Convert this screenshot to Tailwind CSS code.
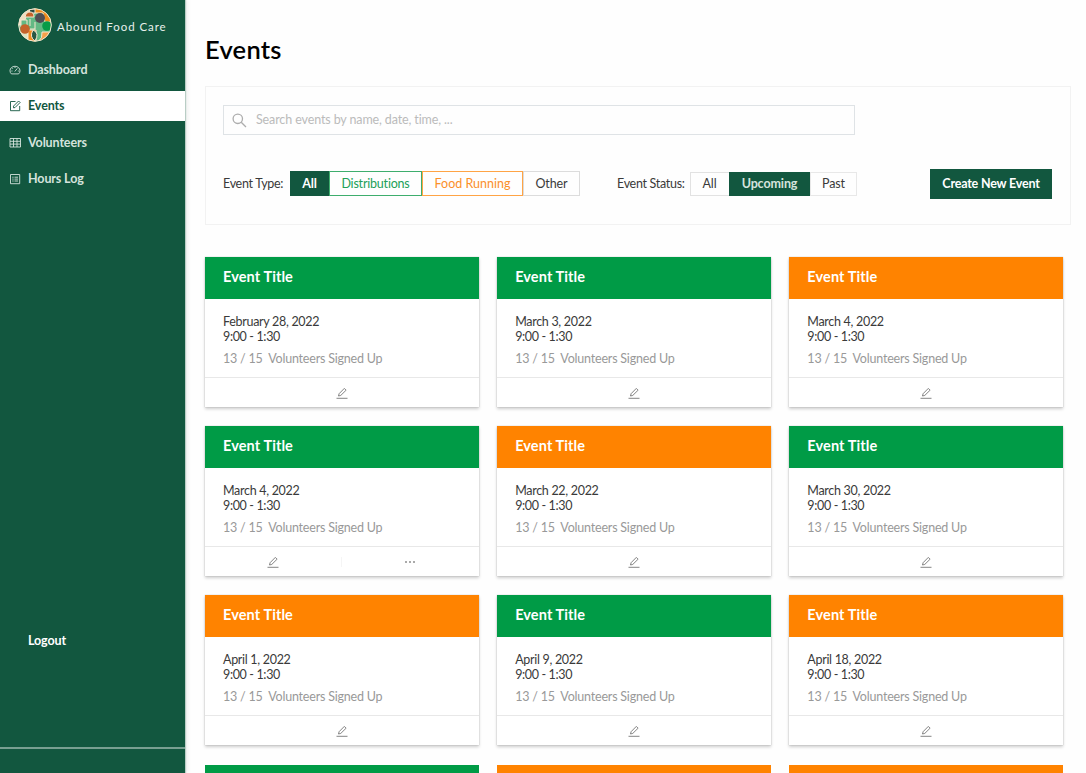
<!DOCTYPE html>
<html lang="en">
<head>
<meta charset="utf-8">
<title>Events</title>
<script src="https://cdn.jsdelivr.net/npm/@tailwindcss/browser@4"></script>
</head>
<body class="h-[773px] w-[1086px] overflow-hidden bg-[#fefefe] font-['Lato','Open_Sans',sans-serif] text-[12.5px] tracking-[-0.12px] text-[#3a3a3a]">
<div class="flex h-full">
  <aside class="flex w-[185px] shrink-0 flex-col bg-[#12573f] text-[#d5e3dd] shadow-[1px_0_1px_#b9cdc5,3px_0_4px_rgba(0,0,0,0.06)]">
    <div class="flex h-[54.5px] items-start gap-[5px] pt-2 pl-[18px]">
      <svg class="size-[34px] shrink-0" viewBox="0 0 34 34">
        <defs><clipPath id="disc"><circle cx="17" cy="17" r="16.3"/></clipPath></defs>
        <g clip-path="url(#disc)" stroke="#f4e6cf" stroke-width="1">
          <rect width="34" height="34" fill="#63b984"/>
          <path d="M0 0H15V5Q8 5 7 12V17H0Z" fill="#f0dfc0"/>
          <path d="M16 0H34V14H27L25 5H16Z" fill="#ee8b1c"/>
          <path d="M11 1H17V5H12Z" fill="#2d4a40"/>
          <path d="M7 9Q8 4 12 4Q16 4 16 9Z" fill="#c5632b"/>
          <path d="M3 12H9V19H3Z" fill="#63b984"/>
          <path d="M12 11V18M17 14V21H12" fill="none"/>
          <path d="M24 24H34V34H20Q25 30 24 24Z" fill="#f6a04a"/>
          <path d="M0 24H10V34H0Z" fill="#dce5c4"/>
          <path d="M10 22H18V34H10Z" fill="#f28c1e"/>
          <path d="M15 22Q22 25 17 33Q11 29 15 22Z" fill="#295844"/>
          <g stroke="none">
            <circle cx="7" cy="21" r="4.8" fill="#c5632b"/>
            <circle cx="22" cy="10" r="5" fill="#514e53"/>
            <circle cx="29" cy="18" r="4.8" fill="#079b47"/>
          </g>
        </g>
        <circle cx="17" cy="17" r="16.3" fill="none" stroke="#f4e6cf" stroke-width="1"/>
      </svg>
      <span class="pt-[11px] text-[11.5px] leading-4 tracking-[0.92px] whitespace-nowrap text-[#e8f0ec]">Abound Food Care</span>
    </div>
    <nav class="flex flex-col gap-[6.5px] font-bold">
      <a class="flex h-[30px] items-center gap-[7px] pl-[9px]">
        <svg class="size-3" viewBox="0 0 12 12" fill="none" stroke="currentColor" stroke-width=".9"><path d="M2.4 9.9A5 4.5 0 1 1 9.6 9.9ZM5.8 7.5 8.3 4.4M2.4 7H3.5M8.8 7H9.8M6 2.9V4M3.3 4.2 4 4.9"/></svg>
        <span class="pt-px">Dashboard</span></a>
      <a class="flex h-[30px] items-center gap-[7px] bg-white pl-[9px] text-[#12573f]">
        <svg class="size-3" viewBox="0 0 12 12" fill="none" stroke="currentColor" stroke-width=".9"><path d="M6.5 1.5H1.5V10.7H10.7V6M4.5 7.8V6.1L9.6 1 11.1 2.5 6 7.6Z"/></svg>
        <span>Events</span></a>
      <a class="flex h-[30px] items-center gap-[7px] pl-[9px]">
        <svg class="size-3" viewBox="0 0 12 12" fill="none" stroke="currentColor" stroke-width=".9"><path d="M1 1.5H11.5V10H1ZM1 4.3H11.5M1 7.1H11.5M4.5 1.5V10M8 1.5V10"/></svg>
        <span class="pt-px">Volunteers</span></a>
      <a class="flex h-[30px] items-center gap-[7px] pl-[9px]">
        <svg class="size-3" viewBox="0 0 12 12" fill="none" stroke="currentColor" stroke-width=".9"><path d="M1.5 1.5H10.7V10.7H1.5ZM3.3 4.2H4.6M5.5 4.2H9M3.3 6.1H4.6M5.5 6.1H9M3.3 8H4.6M5.5 8H9"/></svg>
        <span>Hours Log</span></a>
    </nav>
    <a class="mt-auto pb-[96px] pl-7 font-bold text-white">Logout</a>
    <div class="h-[26px] border-t-2 border-[#789f91]"></div>
  </aside>

  <main class="flex min-w-0 flex-1 flex-col overflow-hidden pl-5">
    <h1 class="mt-[33px] h-[53px] shrink-0 text-[25.5px] leading-8 font-semibold tracking-[0.25px] text-black">Events</h1>
    <section class="flex h-[139px] w-[866px] shrink-0 flex-col border border-[#f2f2f2] pt-[18px] pl-[17px]">
      <div class="flex h-[30px] w-[632px] items-center gap-[9px] border border-[#dfe3e6] pl-2">
        <svg class="size-[15px]" viewBox="0 0 15 15" fill="none" stroke="#adadad" stroke-width="1.3"><circle cx="5.8" cy="5.8" r="4.7"/><path d="M9.2 9.2 14 14"/></svg>
        <span class="text-[#bbb]">Search events by name, date, time, ...</span>
      </div>
      <div class="mt-[34px] flex h-[30px] items-center">
        <span class="w-[67px] tracking-[-0.3px] whitespace-nowrap">Event Type:</span>
        <div class="mb-px flex h-[25px]">
          <span class="flex w-[39px] items-center justify-center bg-[#12573f] pt-px font-bold text-white">All</span>
          <span class="flex w-[93px] items-center justify-center border border-[#3ead6d] pt-px tracking-[-0.2px] text-[#22a058]">Distributions</span>
          <span class="flex w-[101px] items-center justify-center border border-[#ffa445] pt-px tracking-normal text-[#fb902a]">Food Running</span>
          <span class="flex w-[57px] items-center justify-center border border-[#dcdcdc] pt-px">Other</span>
        </div>
        <span class="ml-[37px] w-[73px] tracking-[-0.3px] whitespace-nowrap">Event Status:</span>
        <div class="flex h-6">
          <span class="flex w-[39px] items-center justify-center border border-r-0 border-[#e2e2e2] pr-px">All</span>
          <span class="flex w-[81px] items-center justify-center bg-[#12573f] font-bold text-[#d5e3dd]">Upcoming</span>
          <span class="flex w-[47px] items-center justify-center border border-[#e8e8e8]">Past</span>
        </div>
        <span class="ml-[73px] flex h-[30px] w-[122px] items-center justify-center bg-[#12573f] font-bold tracking-[-0.2px] whitespace-nowrap text-white">Create New Event</span>
      </div>
    </section>
    <section id="events" class="mt-8 grid w-[858px] shrink-0 grid-cols-3 gap-x-[18.5px] gap-y-[19px]">
    </section>
    <div class="mt-[20px] grid h-[8px] w-[858px] shrink-0 grid-cols-3 gap-x-[18.5px]">
      <div class="bg-[#009b46]"></div><div class="bg-[#ff8300]"></div><div class="bg-[#ff8300]"></div>
    </div>
  </main>
</div>

<template id="card">
  <article class="flex h-[150px] flex-col bg-white shadow-[0_2px_3px_rgba(0,0,0,0.2),0_0_1px_rgba(0,0,0,0.25)]">
    <h2 class="h-[41.5px] shrink-0 pt-[10px] pl-[18px] text-[14.5px] leading-5 font-bold tracking-[0.1px] text-white">Event Title</h2>
    <div class="h-[78.5px] shrink-0 pt-[15px] pl-[18px] tracking-[-0.3px]">
      <p class="date h-[15px] leading-[15px]"></p>
      <p class="h-[22px] leading-[15px] tracking-[-0.35px]">9:00 - 1:30</p>
      <p class="leading-[15px] tracking-[-0.2px] whitespace-pre text-[#999]">13 / 15  Volunteers Signed Up</p>
    </div>
    <footer class="flex flex-1 items-center border-t border-[#e8e8e8] text-[#777]">
      <span class="flex flex-1 justify-center"><svg class="size-3" viewBox="0 0 12 12" fill="none" stroke="currentColor" stroke-width=".9"><path d="M.5 11.3H11.5M2.5 9 3.1 6.7 8.3 1.4 10.1 3.2 4.8 8.4Z"/></svg></span>
      <span class="more flex flex-1 justify-center gap-[2px] border-l border-[#f5f5f5] py-1"><i class="size-[2px] bg-[#aaa]"></i><i class="size-[2px] bg-[#aaa]"></i><i class="size-[2px] bg-[#aaa]"></i></span>
    </footer>
  </article>
</template>
<script>
const G = 'bg-[#009b46]', O = 'bg-[#ff8300]';
const events = [
  ['February 28, 2022', G], ['March 3, 2022', G], ['March 4, 2022', O],
  ['March 4, 2022', G, true], ['March 22, 2022', O], ['March 30, 2022', G],
  ['April 1, 2022', O], ['April 9, 2022', G], ['April 18, 2022', O]
];
for (const [date, color, more] of events) {
  const card = document.getElementById('card').content.cloneNode(true);
  card.querySelector('h2').classList.add(color);
  card.querySelector('.date').textContent = date;
  if (!more) card.querySelector('.more').remove();
  document.getElementById('events').append(card);
}
</script>
</body>
</html>
